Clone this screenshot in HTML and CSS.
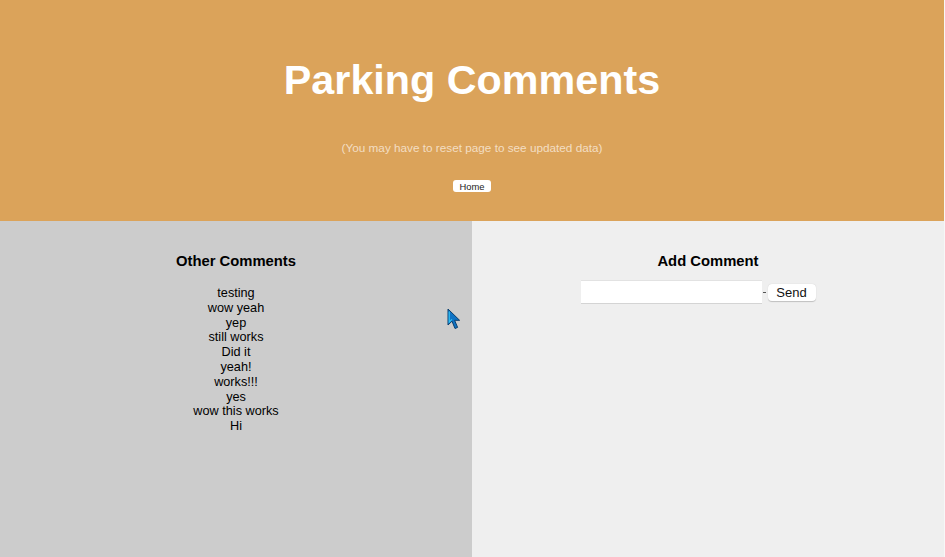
FILE: index.html
```html
<!DOCTYPE html>
<html lang="en">
<head>
<meta charset="utf-8">
<title>Parking Comments</title>
<link rel="stylesheet" href="styles.css">
</head>
<body>
<div class="page">
  <header class="hero">
    <h1 class="hero-title">Parking Comments</h1>
    <p class="hero-note">(You may have to reset page to see updated data)</p>
    <button class="home-btn" type="button">Home</button>
  </header>
  <main class="panels">
    <section class="panel panel-list">
      <h2 class="panel-title">Other Comments</h2>
      <ul class="comments">
        <li>testing</li>
        <li>wow yeah</li>
        <li>yep</li>
        <li>still works</li>
        <li>Did it</li>
        <li>yeah!</li>
        <li>works!!!</li>
        <li>yes</li>
        <li>wow this works</li>
        <li>Hi</li>
      </ul>
    </section>
    <section class="panel panel-form">
      <h2 class="panel-title">Add Comment</h2>
      <form class="comment-form">
        <input class="comment-input" type="text">
        <span class="dash"></span>
        <button class="send-btn" type="button">Send</button>
      </form>
    </section>
  </main>
  <svg class="cursor" width="16" height="24" viewBox="0 0 16 24" aria-hidden="true">
    <path d="M1 1 L1 17 L5 13.2 L8 20.5 L10.6 19.4 L7.6 12.3 L12.6 12.3 Z" fill="#0f73c4" stroke="#0a3f6e" stroke-width="1" stroke-linejoin="round"/>
    <path d="M2.2 3.5 L2.2 14 L5 11.4" fill="none" stroke="#32c3f5" stroke-width="1.2"/>
  </svg>
</div>
</body>
</html>
```

FILE: styles.css
```css
html, body {
  margin: 0;
  padding: 0;
}

body {
  font-family: "Liberation Sans", Arial, Helvetica, sans-serif;
  color: #000;
  background: #f7f7f7;
}

.page {
  position: relative;
  display: flex;
  flex-direction: column;
  min-height: 100vh;
  margin-right: 1px;
}

.hero {
  height: 221px;
  box-sizing: border-box;
  padding-top: 56px;
  background: #dba35a;
  display: flex;
  flex-direction: column;
  align-items: center;
}

.hero-title {
  margin: 0;
  font-size: 41.3px;
  line-height: 48px;
  font-weight: bold;
  color: #ffffff;
}

.hero-note {
  margin: 37px 0 0;
  font-size: 11.75px;
  line-height: 14px;
  color: #f3dec3;
}

.home-btn {
  margin-top: 25px;
  width: 38px;
  height: 12px;
  padding: 0;
  border: none;
  border-radius: 3px;
  background: #ffffff;
  font-family: "Liberation Sans", Arial, sans-serif;
  font-size: 9.4px;
  line-height: 13px;
  color: #222;
}

.panels {
  flex: 1;
  display: grid;
  grid-template-columns: 1fr 1fr;
}

.panel {
  padding-top: 31px;
  display: flex;
  flex-direction: column;
  align-items: center;
}

.panel-list {
  background: #cccccc;
}

.panel-form {
  background: #efefef;
}

.panel-title {
  margin: 0;
  font-size: 14.8px;
  line-height: 18px;
  font-weight: bold;
}

.comments {
  list-style: none;
  margin: 16px 0 0;
  padding: 0;
  text-align: center;
  font-size: 12.7px;
  line-height: 14.8px;
}

.comment-form {
  margin-top: 10px;
  padding-right: 20px;
  display: flex;
  align-items: center;
}

.comment-input {
  box-sizing: border-box;
  width: 181px;
  height: 24px;
  margin: 0;
  padding: 0 4px;
  border: none;
  border-top: 1px solid #e2e2e2;
  border-bottom: 1px solid #d4d4d4;
  background: #ffffff;
  outline: none;
}

.dash {
  width: 3px;
  height: 1px;
  margin: 0 2px 0 1px;
  background: #555;
}

.send-btn {
  width: 48px;
  height: 17px;
  padding: 0;
  border: none;
  border-radius: 4px;
  background: #ffffff;
  box-shadow: 0 0.5px 1px rgba(0, 0, 0, 0.2);
  font-family: "Liberation Sans", Arial, sans-serif;
  font-size: 13px;
  line-height: 17px;
  color: #111;
}

.cursor {
  position: absolute;
  left: 447px;
  top: 308px;
}
```
